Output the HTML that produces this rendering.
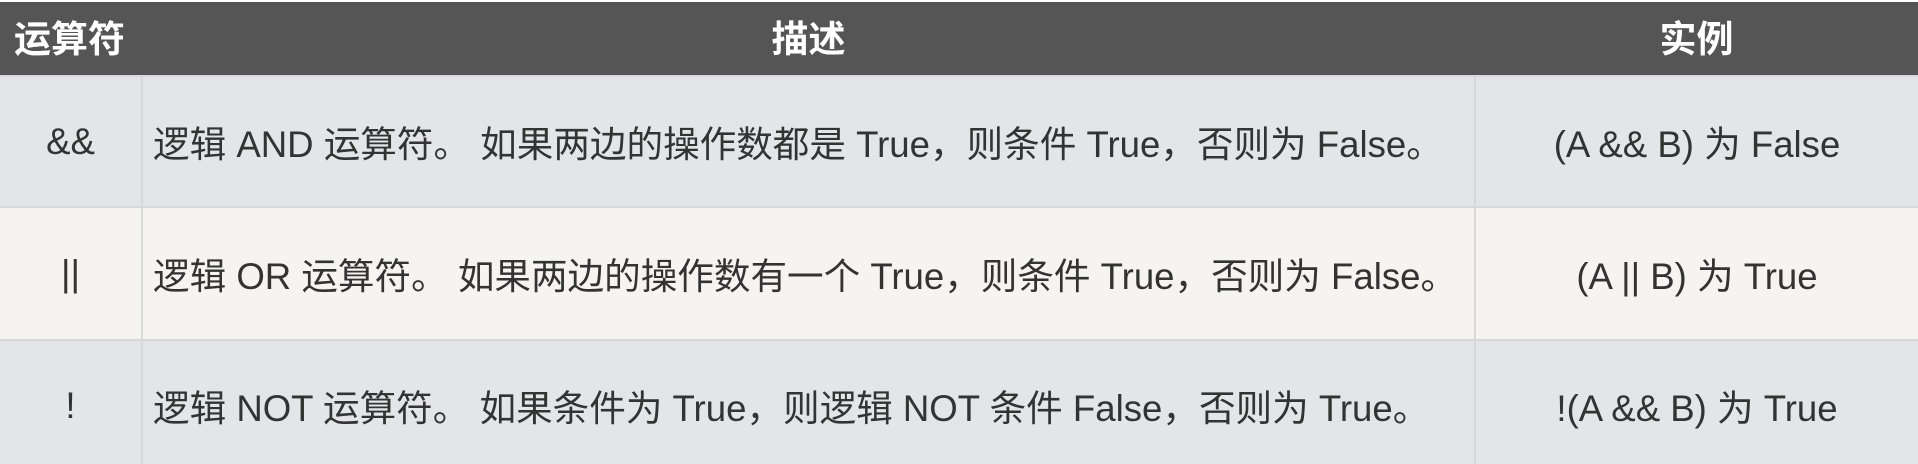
<!DOCTYPE html>
<html><head><meta charset="utf-8"><style>
html,body{margin:0;padding:0;width:1918px;height:464px;overflow:hidden;background:#fff}
table{border-collapse:collapse;width:1918px;table-layout:fixed;margin-top:2px;font-family:"Liberation Sans","Noto Sans CJK SC",sans-serif;color:#333}
th{background:#555;color:#fff;font-weight:bold;font-size:37px;height:74px;padding:0 0 6px 0;box-sizing:border-box;text-align:center}
th:first-child{text-align:left;padding-left:14px}
td{font-size:36.6px;padding:0;border-left:2px solid #d6d8da;border-top:2px solid #d6d8da;text-align:center}
td:first-child{border-left:none}
td.d{text-align:left;padding-left:10px;white-space:nowrap}
tr.a td{background:#e3e5e9}
tr.b td{background:#f5f4f0}
</style></head><body>
<table>
<colgroup><col style="width:142px"><col style="width:1333px"><col style="width:443px"></colgroup>
<tr><th>运算符</th><th>描述</th><th>实例</th></tr>
<tr class="a" style="height:131px"><td>&amp;&amp;</td><td class="d">逻辑 AND 运算符。 如果两边的操作数都是 True，则条件 True，否则为 False。</td><td>(A &amp;&amp; B) 为 False</td></tr>
<tr class="b" style="height:133px"><td>||</td><td class="d">逻辑 OR 运算符。 如果两边的操作数有一个 True，则条件 True，否则为 False。</td><td>(A || B) 为 True</td></tr>
<tr class="a" style="height:130px"><td>!</td><td class="d">逻辑 NOT 运算符。 如果条件为 True，则逻辑 NOT 条件 False，否则为 True。</td><td>!(A &amp;&amp; B) 为 True</td></tr>
</table>
</body></html>
